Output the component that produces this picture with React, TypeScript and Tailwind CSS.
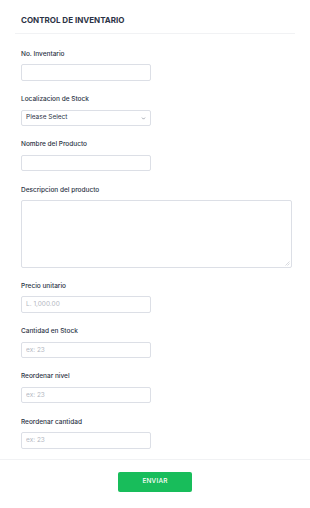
import { ChevronDown } from 'lucide-react'

const label = 'block h-[8px] leading-[8px] text-[6.5px] font-medium text-[#2c3345] mb-[6.5px]'
const input =
  'block h-[16.5px] w-[129.5px] rounded-[2px] border border-[#dcdfe6] bg-white px-[4px] text-[6.5px] text-[#2c3345] placeholder:text-[#b3b7c1] outline-none'

function Field({ title, placeholder }: { title: string; placeholder?: string }) {
  return (
    <div className="pb-[14.33px]">
      <label className={label}>{title}</label>
      <input className={input} placeholder={placeholder} />
    </div>
  )
}

export default function App() {
  return (
    <div className="w-[310px] h-[508px] bg-white font-['Inter',sans-serif] overflow-hidden">
      <div className="px-[15px]">
        <div className="pt-[15px] pb-[8px] border-b border-[#f1f2f4]">
          <h1 className="px-[6px] h-[10px] leading-[10px] text-[8px] font-bold text-[#2c3345]">
            CONTROL DE INVENTARIO
          </h1>
        </div>
        <div className="px-[6px] pt-[15.7px]">
          <Field title="No. Inventario" />
          <div className="pb-[14.33px]">
            <label className={label}>Localizacion de Stock</label>
            <div className="relative w-[129.5px]">
              <select className="block h-[16.5px] w-full appearance-none rounded-[2px] border border-[#dcdfe6] bg-white px-[4px] text-[6.5px] text-[#2c3345] outline-none">
                <option>Please Select</option>
              </select>
              <ChevronDown
                className="absolute right-[5px] top-[6px] h-[5px] w-[5px] text-[#6f7685] pointer-events-none"
                strokeWidth={3}
              />
            </div>
          </div>
          <Field title="Nombre del Producto" />
          <div className="pb-[14px]">
            <label className={label}>Descripcion del producto</label>
            <div className="relative w-[270.5px]">
              <textarea className="block h-[67.5px] w-full resize-none rounded-[2px] border border-[#dcdfe6] bg-white px-[4px] text-[6.5px] outline-none" />
              <svg
                className="absolute right-[2px] bottom-[2px] pointer-events-none"
                width="5"
                height="5"
                viewBox="0 0 5 5"
              >
                <path d="M4.5 0.5 L0.5 4.5 M4.5 2.5 L2.5 4.5" stroke="#c9ccd3" strokeWidth="0.7" />
              </svg>
            </div>
          </div>
          <Field title="Precio unitario" placeholder="L. 1,000.00" />
          <Field title="Cantidad en Stock" placeholder="ex: 23" />
          <Field title="Reordenar nivel" placeholder="ex: 23" />
          <div className="pb-[10px]">
            <label className={label}>Reordenar cantidad</label>
            <input className={input} placeholder="ex: 23" />
          </div>
        </div>
      </div>
      <div className="border-t border-[#f1f2f4] flex justify-center pt-[12.5px]">
        <button className="h-[19.5px] w-[74.5px] rounded-[2px] bg-[#18bd5b] text-[6.5px] font-medium text-white tracking-[0.2px]">
          ENVIAR
        </button>
      </div>
    </div>
  )
}
